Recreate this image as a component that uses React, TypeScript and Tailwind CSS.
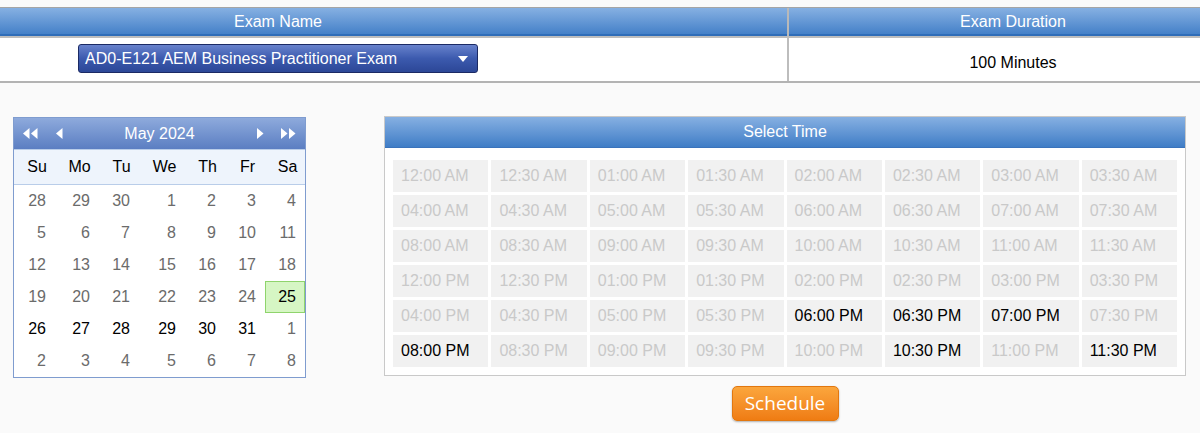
const times = [
  "12:00 AM", "12:30 AM", "01:00 AM", "01:30 AM", "02:00 AM", "02:30 AM", "03:00 AM", "03:30 AM",
  "04:00 AM", "04:30 AM", "05:00 AM", "05:30 AM", "06:00 AM", "06:30 AM", "07:00 AM", "07:30 AM",
  "08:00 AM", "08:30 AM", "09:00 AM", "09:30 AM", "10:00 AM", "10:30 AM", "11:00 AM", "11:30 AM",
  "12:00 PM", "12:30 PM", "01:00 PM", "01:30 PM", "02:00 PM", "02:30 PM", "03:00 PM", "03:30 PM",
  "04:00 PM", "04:30 PM", "05:00 PM", "05:30 PM", "06:00 PM", "06:30 PM", "07:00 PM", "07:30 PM",
  "08:00 PM", "08:30 PM", "09:00 PM", "09:30 PM", "10:00 PM", "10:30 PM", "11:00 PM", "11:30 PM",
];

const open = ["06:00 PM", "06:30 PM", "07:00 PM", "08:00 PM", "10:30 PM", "11:30 PM"];

const dayNames = ["Su", "Mo", "Tu", "We", "Th", "Fr", "Sa"];

// [day, state] : 0 = other month / past, 1 = selectable, 2 = selected
const weeks: [number, number][][] = [
  [[28, 0], [29, 0], [30, 0], [1, 0], [2, 0], [3, 0], [4, 0]],
  [[5, 0], [6, 0], [7, 0], [8, 0], [9, 0], [10, 0], [11, 0]],
  [[12, 0], [13, 0], [14, 0], [15, 0], [16, 0], [17, 0], [18, 0]],
  [[19, 0], [20, 0], [21, 0], [22, 0], [23, 0], [24, 0], [25, 2]],
  [[26, 1], [27, 1], [28, 1], [29, 1], [30, 1], [31, 1], [1, 0]],
  [[2, 0], [3, 0], [4, 0], [5, 0], [6, 0], [7, 0], [8, 0]],
];

const calCols = "grid grid-cols-[41px_44px_40px_46px_40px_40px_40px]";

function Arrow({ dir, double }: { dir: "l" | "r"; double?: boolean }) {
  const one = dir === "l" ? "M6.5 0 L0 5.5 L6.5 11 Z" : "M0 0 L6.5 5.5 L0 11 Z";
  return (
    <svg width={double ? 15 : 7} height="11" viewBox={double ? "0 0 15 11" : "0 0 7 11"} className="fill-white">
      <path d={one} />
      {double && <path d={one} transform="translate(8 0)" />}
    </svg>
  );
}

function Calendar() {
  return (
    <div className="w-[293px] border border-[#7f9ccf] bg-white">
      <div className="grid h-[31px] grid-cols-[1fr_auto_1fr] items-center bg-gradient-to-b from-[#8eaadc] to-[#5b7ec2] text-white">
        <div className="flex items-center gap-[18px] pl-[9px]">
          <Arrow dir="l" double />
          <Arrow dir="l" />
        </div>
        <div className="text-center text-[16px]">May 2024</div>
        <div className="flex items-center justify-end gap-[17px] pr-[9px]">
          <Arrow dir="r" />
          <Arrow dir="r" double />
        </div>
      </div>
      <div className={`${calCols} h-[36px] items-center border-t border-b border-[#b9cde9] bg-[#eef4fc] text-[16px] text-black`}>
        {dayNames.map((d) => (
          <div key={d} className="pl-[5px] text-center">
            {d}
          </div>
        ))}
      </div>
      {weeks.map((w, i) => (
        <div key={i} className={`${calCols} h-[32px]`}>
          {w.map(([n, s], j) => (
            <div
              key={j}
              className={
                s === 2
                  ? "flex items-center justify-end border border-[#8fd46c] bg-[#d6f6c4] pr-[8px] text-[16px] text-black"
                  : s === 1
                    ? "flex items-center justify-end pr-[9px] text-[16px] text-black"
                    : "flex items-center justify-end pr-[9px] text-[16px] text-[#6b6b6b]"
              }
            >
              {n}
            </div>
          ))}
        </div>
      ))}
    </div>
  );
}

function TimePanel() {
  return (
    <div className="flex w-[802px] flex-col items-center">
      <div className="w-full border border-[#c9c9c9] bg-white">
        <div className="flex h-[31px] items-center justify-center border-b border-[#3a73bb] bg-gradient-to-b from-[#86b0e2] to-[#3f7dc6] text-[16px] text-white">
          Select Time
        </div>
        <div className="grid grid-cols-8 gap-[3px] px-[8px] pt-[12px] pb-[8px]">
          {times.map((t) => (
            <div
              key={t}
              className={`flex h-[32px] items-center bg-[#f1f1f1] pl-[8px] text-[16px] ${open.includes(t) ? "text-black" : "text-[#c9c9c9]"}`}
            >
              {t}
            </div>
          ))}
        </div>
      </div>
      <button className="mt-[10px] h-[35px] w-[107px] rounded-[5px] border border-[#e2770f] bg-gradient-to-b from-[#fba63c] to-[#ef7c12] font-['Open_Sans',sans-serif] text-[19px] text-white shadow-[0_1px_2px_rgba(0,0,0,0.3)]">
        Schedule
      </button>
    </div>
  );
}

export default function App() {
  return (
    <div className="h-[433px] w-[1200px] overflow-hidden bg-[#fafafa] font-['Liberation_Sans',Arial,sans-serif]">
      <div className="pt-[7px]">
        <div className="-ml-[231px] grid w-[1468px] grid-cols-[1020px_448px] border-t border-b-2 border-t-[#a5a5a5] border-b-[#b3b3b3] bg-white">
          <div className="flex h-[28px] items-center justify-center border-r-2 border-[#b9b9b9] bg-gradient-to-b from-[#86b0e2] to-[#3f7dc6] text-[16px] text-white shadow-[inset_0_-2px_0_#2f6db8]">
            Exam Name
          </div>
          <div className="flex h-[28px] items-center justify-center bg-gradient-to-b from-[#86b0e2] to-[#3f7dc6] text-[16px] text-white shadow-[inset_0_-2px_0_#2f6db8]">
            Exam Duration
          </div>
          <div className="flex h-[45px] items-start justify-center border-t-2 border-r-2 border-[#bdbdbd] pt-[6px]">
            <div className="flex h-[29px] w-[400px] items-center justify-between rounded-[3px] border border-[#1b2a64] bg-gradient-to-b from-[#6882cc] via-[#3c5aae] to-[#2c4797] pl-[6px] pr-[9px] text-[16px] text-white">
              <span>AD0-E121 AEM Business Practitioner Exam</span>
              <svg width="10" height="6" viewBox="0 0 10 6" className="fill-white">
                <path d="M0 0 H10 L5 6 Z" />
              </svg>
            </div>
          </div>
          <div className="flex h-[45px] items-center justify-center border-t-2 border-[#bdbdbd] pt-[7px] text-[16px] text-black">
            100 Minutes
          </div>
        </div>
      </div>
      <div className="mt-[34px] flex items-start pl-[13px]">
        <Calendar />
        <div className="ml-[78px] -mt-[1px]">
          <TimePanel />
        </div>
      </div>
    </div>
  );
}
